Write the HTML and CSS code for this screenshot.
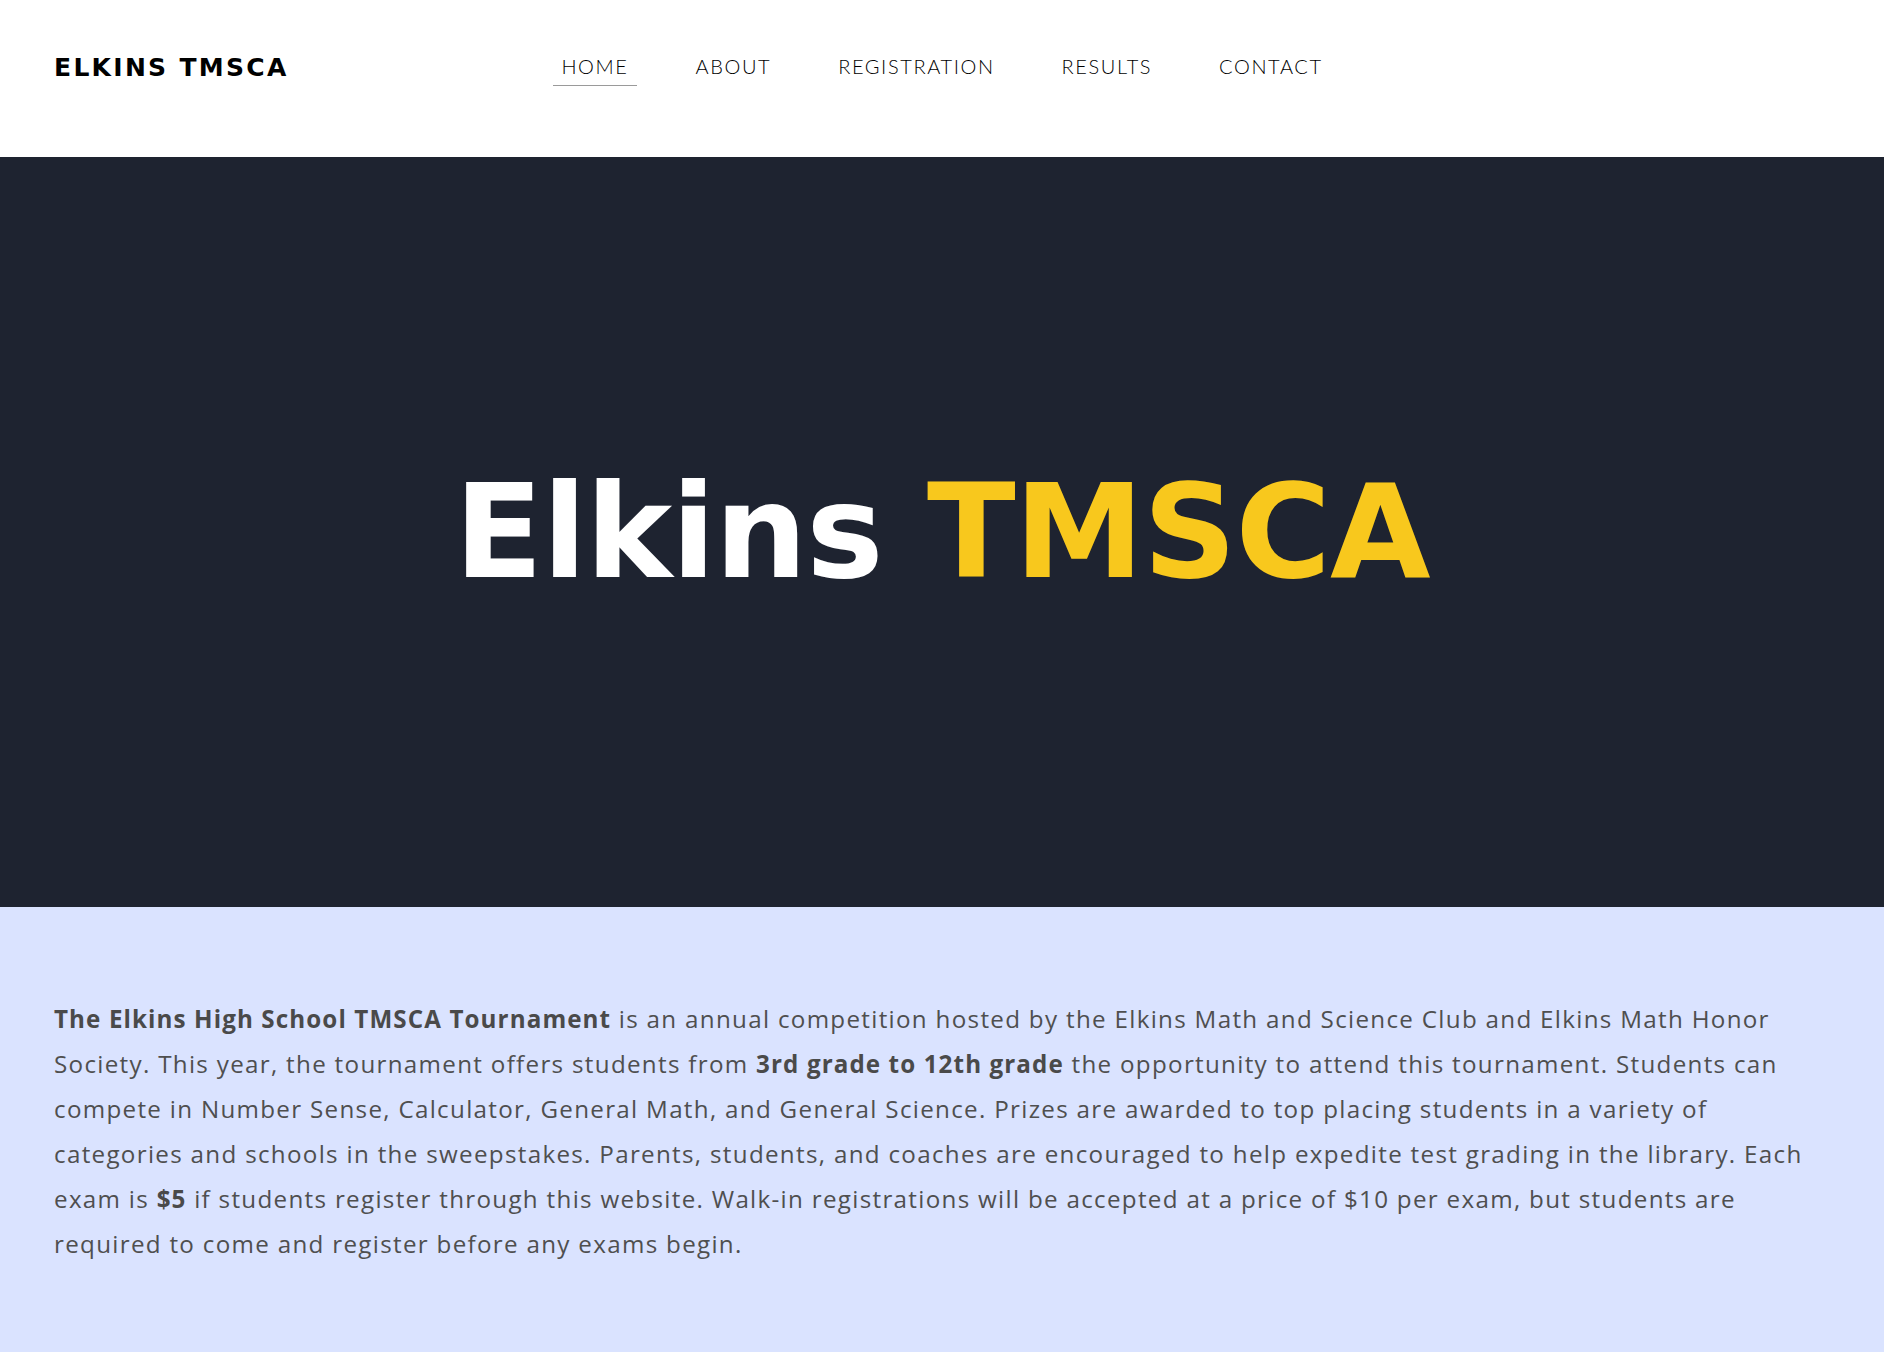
FILE: index.html
```html
<!DOCTYPE html>
<html lang="en">
<head>
<meta charset="utf-8">
<title>Elkins TMSCA</title>
<link rel="stylesheet" href="styles.css">
</head>
<body>
<header class="site-header">
  <div class="logo">ELKINS TMSCA</div>
  <nav class="nav">
    <a class="nav-link active" href="#">HOME</a>
    <a class="nav-link" href="#">ABOUT</a>
    <a class="nav-link" href="#">REGISTRATION</a>
    <a class="nav-link" href="#">RESULTS</a>
    <a class="nav-link" href="#">CONTACT</a>
  </nav>
  <div class="spacer"></div>
</header>
<section class="hero">
  <h1 class="hero-title">Elkins <span class="accent">TMSCA</span></h1>
</section>
<section class="intro">
  <p class="intro-text"><strong>The Elkins High School TMSCA Tournament</strong> is an annual competition hosted by the Elkins Math and Science Club and Elkins Math Honor Society. This year, the tournament offers students from <strong>3rd grade to 12th grade</strong> the opportunity to attend this tournament. Students can compete in Number Sense, Calculator, General Math, and General Science. Prizes are awarded to top placing students in a variety of categories and schools in the sweepstakes. Parents, students, and coaches are encouraged to help expedite test grading in the library. Each exam is <strong>$5</strong> if students register through this website. Walk-in registrations will be accepted at a price of $10 per exam, but students are required to come and register before any exams begin.</p>
</section>
</body>
</html>
```

FILE: styles.css
```css
* {
  box-sizing: border-box;
}

html, body {
  margin: 0;
  padding: 0;
}

body {
  background: #dae3ff;
  font-family: "Open Sans", "DejaVu Sans", sans-serif;
}

.site-header {
  height: 157px;
  background: #ffffff;
  display: grid;
  grid-template-columns: 1fr auto 1fr;
  align-items: start;
  padding: 53px 54px 0;
}

.logo {
  font-family: "DejaVu Sans", sans-serif;
  font-weight: 700;
  font-size: 25px;
  line-height: 30px;
  letter-spacing: 2.3px;
  color: #000000;
  white-space: nowrap;
}

.nav {
  display: flex;
  gap: 51px;
  padding-top: 1px;
}

.nav-link {
  font-family: "Lato", sans-serif;
  font-weight: 300;
  font-size: 20px;
  line-height: 24px;
  letter-spacing: 1.6px;
  color: #000000;
  text-decoration: none;
  padding: 0 8px 7px;
  border-bottom: 1px solid transparent;
}

.nav-link.active {
  border-bottom-color: #9a9a9a;
}

.hero {
  height: 750px;
  background: #1e2330;
  display: flex;
  align-items: center;
  justify-content: center;
}

.hero-title {
  margin: 0;
  font-family: "DejaVu Sans", sans-serif;
  font-weight: 700;
  font-size: 130px;
  line-height: 1;
  color: #ffffff;
  letter-spacing: -1px;
}

.accent {
  color: #f8c81d;
}

.intro {
  padding: 89px 54px 90px;
}

.intro-text {
  margin: 0;
  font-size: 24.2px;
  line-height: 45px;
  color: #4f4f4f;
  letter-spacing: 1.3px;
}

.intro-text strong {
  font-weight: 700;
  color: #4a4a4a;
  letter-spacing: 1.1px;
}
```
